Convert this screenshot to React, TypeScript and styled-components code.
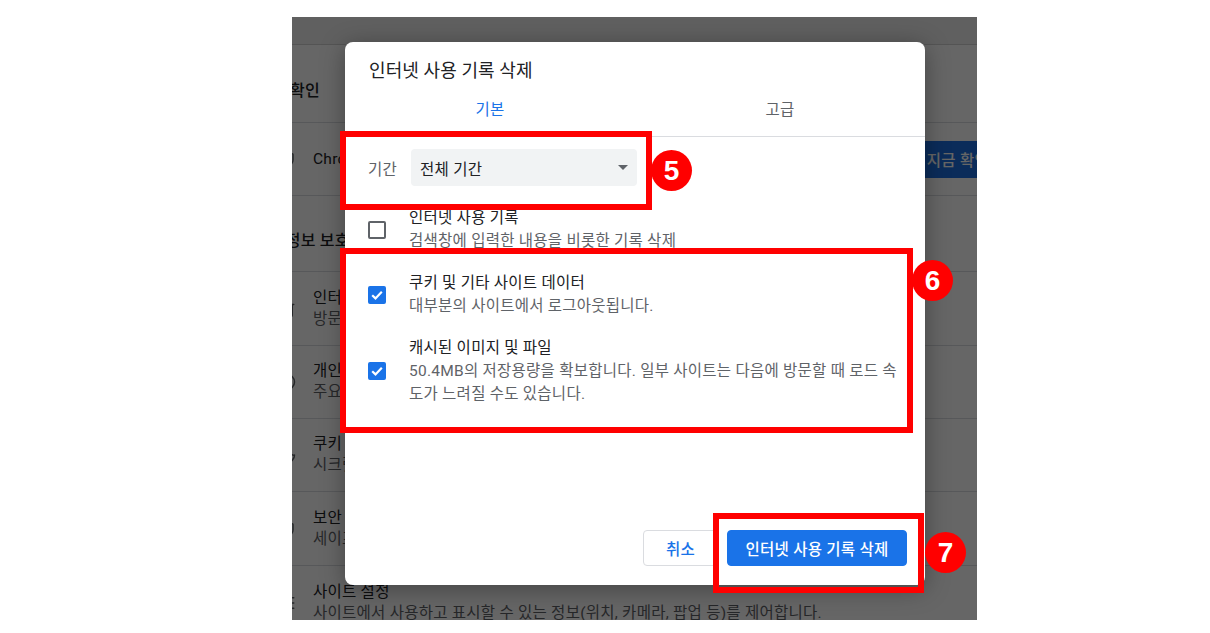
import styled, { createGlobalStyle } from 'styled-components';
import { Trash2, ShieldCheck, Compass, Cookie, Shield, SlidersHorizontal } from 'lucide-react';

const GlobalStyle = createGlobalStyle`
	html, body {
		margin: 0;
		background: #ffffff;
	}
	body {
		font-family: Roboto, "Noto Sans CJK KR", sans-serif;
		color: #202124;
	}
	* {
		box-sizing: border-box;
	}
`;

const Page = styled.div`
	padding: 17px 0 13px 292px;
`;

const Screen = styled.div`
	position: relative;
	width: 685px;
	height: 603px;
	overflow: hidden;
	background: #ffffff;
`;

/* ---------- settings page behind the dialog ---------- */

const Toolbar = styled.div`
	height: 28px;
	background: #efefef;
	border-bottom: 1px solid #d2d2d2;
`;

const Settings = styled.div`
	display: flex;
	flex-direction: column;
	width: 800px;
	margin-left: -40px;
`;

const SectionTitle = styled.div`
	padding: ${(p: { $top: number; $bottom: number }) => `${p.$top}px 0 ${p.$bottom}px 4px`};
	font-size: 16px;
	font-weight: 500;
	line-height: 20px;
	letter-spacing: 0.2px;
	color: #202124;
`;

const Card = styled.div`
	display: flex;
	flex-direction: column;
	border-bottom: 1px solid #dadce0;
`;

const Row = styled.div`
	display: flex;
	align-items: center;
	gap: 17px;
	height: ${(p: { $h: number }) => p.$h}px;
	padding: 0 47px 0 26px;
	border-top: 1px solid #dadce0;
	font-size: 15.5px;
	letter-spacing: 0.25px;
`;

const RowIcon = styled.div`
	flex: none;
	display: flex;
	width: 18px;
	color: #5f6368;
`;

const RowText = styled.div`
	flex: 1;
	min-width: 0;
	display: flex;
	flex-direction: column;
	white-space: nowrap;
	overflow: hidden;
`;

const RowTitle = styled.div`
	line-height: 21px;
	color: #202124;
`;

const RowSub = styled.div`
	line-height: 21px;
	color: #5f6368;
`;

const CheckButton = styled.div`
	flex: none;
	height: 37px;
	padding: 0 16px;
	display: flex;
	align-items: center;
	border-radius: 4px;
	background: #1d6fe0;
	color: #ffffff;
	font-weight: 500;
`;

const Dim = styled.div`
	position: absolute;
	inset: 0;
	background: rgba(0, 0, 0, 0.6);
`;

/* ---------- dialog ---------- */

const Dialog = styled.div`
	position: absolute;
	left: 53px;
	top: 25px;
	width: 580px;
	height: 543px;
	display: flex;
	flex-direction: column;
	background: #ffffff;
	border-radius: 8px;
	box-shadow: 0 4px 24px rgba(0, 0, 0, 0.35);
	font-size: 15.5px;
	letter-spacing: 0.25px;
`;

const Title = styled.div`
	padding: 18px 24px 0;
	font-size: 18px;
	line-height: 22px;
	letter-spacing: 0.1px;
	color: #202124;
`;

const Tabs = styled.div`
	display: grid;
	grid-template-columns: 1fr 1fr;
	margin-top: 8px;
	border-bottom: 1px solid #dadce0;
`;

const Tab = styled.div<{ $active?: boolean }>`
	position: relative;
	padding: 10px 0 16px;
	line-height: 20px;
	text-align: center;
	color: ${(p) => (p.$active ? '#1a73e8' : '#5f6368')};

	&::after {
		content: '';
		display: ${(p) => (p.$active ? 'block' : 'none')};
		position: absolute;
		left: 0;
		right: 0;
		bottom: -1px;
		height: 2px;
		background: #1a73e8;
	}
`;

const Body = styled.div`
	flex: 1;
	display: flex;
	flex-direction: column;
	padding: 12px 0 0 23px;
`;

const PeriodRow = styled.div`
	display: flex;
	align-items: center;
	gap: 14px;
	margin-bottom: 11px;
`;

const PeriodLabel = styled.div`
	color: #5f6368;
`;

const Select = styled.div`
	display: flex;
	align-items: center;
	justify-content: space-between;
	width: 226px;
	height: 37px;
	padding: 0 9px;
	border-radius: 4px;
	background: #f1f3f4;
	color: #202124;
`;

const Caret = styled.span`
	width: 0;
	height: 0;
	border-left: 5.5px solid transparent;
	border-right: 5.5px solid transparent;
	border-top: 5.5px solid #5f6368;
`;

const Option = styled.div`
	display: flex;
	align-items: center;
	gap: 23px;
	padding: 9.5px 0;
`;

const Box = styled.div<{ $checked?: boolean }>`
	flex: none;
	width: 18px;
	height: 18px;
	display: flex;
	align-items: center;
	justify-content: center;
	border-radius: 2px;
	border: 2px solid ${(p) => (p.$checked ? '#1a73e8' : '#5f6368')};
	background: ${(p) => (p.$checked ? '#1a73e8' : '#ffffff')};
`;

const OptionText = styled.div`
	display: flex;
	flex-direction: column;
	width: 500px;
	line-height: 23px;
	white-space: nowrap;
`;

const OptionTitle = styled.div`
	color: #202124;
`;

const OptionSub = styled.div`
	color: #5f6368;
`;

const Footer = styled.div`
	display: flex;
	justify-content: flex-end;
	gap: 9px;
	padding: 0 18px 19px 0;
`;

const Button = styled.div<{ $primary?: boolean }>`
	height: 36px;
	display: flex;
	align-items: center;
	padding: 0 ${(p) => (p.$primary ? 17.5 : 22)}px;
	border-radius: 4px;
	border: 1px solid ${(p) => (p.$primary ? '#1a73e8' : '#dadce0')};
	background: ${(p) => (p.$primary ? '#1a73e8' : '#ffffff')};
	color: ${(p) => (p.$primary ? '#ffffff' : '#1a73e8')};
	font-weight: 500;
`;

/* ---------- annotations ---------- */

type Frame = { $x: number; $y: number; $w: number; $h: number };

const Highlight = styled.div<Frame>`
	position: absolute;
	left: ${(p) => p.$x}px;
	top: ${(p) => p.$y}px;
	width: ${(p) => p.$w}px;
	height: ${(p) => p.$h}px;
	border: 6px solid #ff0000;
	pointer-events: none;
`;

const Badge = styled.div<{ $x: number; $y: number }>`
	position: absolute;
	left: ${(p) => p.$x}px;
	top: ${(p) => p.$y}px;
	width: 41px;
	height: 41px;
	border-radius: 50%;
	display: flex;
	align-items: center;
	justify-content: center;
	background: #ff0000;
	color: #ffffff;
	font-family: "Liberation Sans", Arial, sans-serif;
	font-size: 28px;
	font-weight: 700;
	line-height: 1;
`;

const Check = () => (
	<svg width="14" height="14" viewBox="0 0 14 14">
		<path d="M2.2 7.2 L5.5 10.4 L11.8 3.8" fill="none" stroke="#ffffff" strokeWidth="2.2" />
	</svg>
);

const settingsRows = [
	{ icon: Trash2, title: '인터넷 사용 기록 삭제', sub: '방문 기록, 쿠키, 캐시 등을 삭제합니다', h: 74 },
	{ icon: Compass, title: '개인정보 보호 가이드', sub: '주요 개인정보 보호 및 보안 설정을 검토합니다', h: 73 },
	{ icon: Cookie, title: '쿠키 및 기타 사이트 데이터', sub: '시크릿 모드에서 서드 파티 쿠키가 차단됩니다', h: 73 },
	{ icon: Shield, title: '보안', sub: '세이프 브라우징(위험한 사이트로부터 보호) 및 기타 보안 설정', h: 74 },
	{
		icon: SlidersHorizontal,
		title: '사이트 설정',
		sub: '사이트에서 사용하고 표시할 수 있는 정보(위치, 카메라, 팝업 등)를 제어합니다.',
		h: 75,
	},
];

const options = [
	{ title: '인터넷 사용 기록', sub: ['검색창에 입력한 내용을 비롯한 기록 삭제'], checked: false },
	{ title: '쿠키 및 기타 사이트 데이터', sub: ['대부분의 사이트에서 로그아웃됩니다.'], checked: true },
	{
		title: '캐시된 이미지 및 파일',
		sub: ['50.4MB의 저장용량을 확보합니다. 일부 사이트는 다음에 방문할 때 로드 속', '도가 느려질 수도 있습니다.'],
		checked: true,
	},
];

export default function App() {
	return (
		<Page>
			<GlobalStyle />
			<Screen>
				<Toolbar />
				<Settings>
					<SectionTitle $top={36} $bottom={21}>안전 확인</SectionTitle>
					<Card>
						<Row $h={73}>
							<RowIcon>
								<ShieldCheck size={18} />
							</RowIcon>
							<RowText>
								<RowTitle>Chrome에서 데이터 유출, 잘못된 확장 프로그램 등으로부터 사용자를 보호할 수 있습니다.</RowTitle>
							</RowText>
							<CheckButton>지금 확인</CheckButton>
						</Row>
					</Card>
					<SectionTitle $top={35} $bottom={20}>개인정보 보호 및 보안</SectionTitle>
					<Card>
						{settingsRows.map((r) => (
							<Row key={r.title} $h={r.h}>
								<RowIcon>
									<r.icon size={18} />
								</RowIcon>
								<RowText>
									<RowTitle>{r.title}</RowTitle>
									<RowSub>{r.sub}</RowSub>
								</RowText>
							</Row>
						))}
					</Card>
				</Settings>

				<Dim />

				<Dialog>
					<Title>인터넷 사용 기록 삭제</Title>
					<Tabs>
						<Tab $active>기본</Tab>
						<Tab>고급</Tab>
					</Tabs>
					<Body>
						<PeriodRow>
							<PeriodLabel>기간</PeriodLabel>
							<Select>
								<span>전체 기간</span>
								<Caret />
							</Select>
						</PeriodRow>
						{options.map((o) => (
							<Option key={o.title}>
								<Box $checked={o.checked}>{o.checked && <Check />}</Box>
								<OptionText>
									<OptionTitle>{o.title}</OptionTitle>
									{o.sub.map((line) => (
										<OptionSub key={line}>{line}</OptionSub>
									))}
								</OptionText>
							</Option>
						))}
					</Body>
					<Footer>
						<Button>취소</Button>
						<Button $primary>인터넷 사용 기록 삭제</Button>
					</Footer>
				</Dialog>

				<Highlight $x={48} $y={114} $w={312} $h={79} />
				<Badge $x={359} $y={133}>5</Badge>
				<Highlight $x={48} $y={231} $w={573} $h={185} />
				<Badge $x={620} $y={243}>6</Badge>
				<Highlight $x={421} $y={496} $w={211} $h={80} />
				<Badge $x={633} $y={515}>7</Badge>
			</Screen>
		</Page>
	);
}
